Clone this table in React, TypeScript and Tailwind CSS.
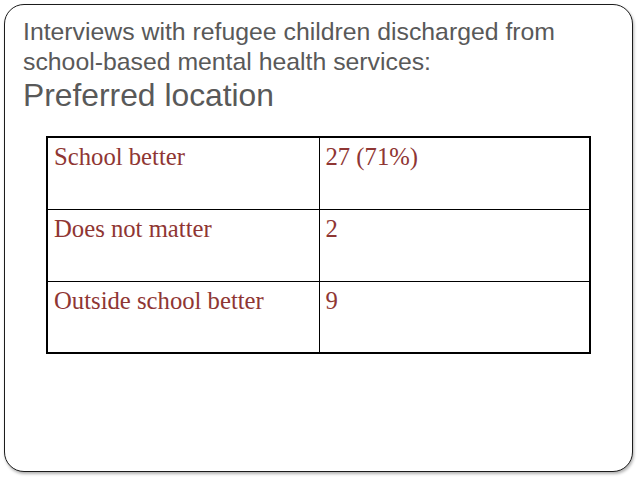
import React from 'react';

const rows: { label: string; value: string }[] = [
  { label: 'School better', value: '27 (71%)' },
  { label: 'Does not matter', value: '2' },
  { label: 'Outside school better', value: '9' },
];

const App: React.FC = () => {
  return (
    <div className="w-[638px] h-[479px] bg-white overflow-hidden">
      <div className="ml-[4px] mt-[4px] w-[629px] h-[468px] rounded-[20px] border-[1.5px] border-[#1c1c1c] bg-white shadow-[1px_2px_3px_rgba(0,0,0,0.3)]">
        <div className="pl-[18px] pt-[12px] text-[#595959] font-['Liberation_Sans',Arial,sans-serif]">
          <p className="text-[24.8px] leading-[30px]">
            Interviews with refugee children discharged from
            <br />
            school-based mental health services:
          </p>
          <h1 className="text-[31.8px] leading-[36px] text-[#595959]">Preferred location</h1>
        </div>

        <table className="ml-[41px] mt-[23px] w-[545px] border-collapse border-2 border-black font-['Liberation_Serif','Times_New_Roman',serif] text-[24.7px] leading-[28px] text-[#8f3633]">
          <tbody>
            {rows.map(({ label, value }) => (
              <tr key={label} className="h-[72px]">
                <td className="w-[272px] border border-black px-[6px] pt-[5px] align-top">{label}</td>
                <td className="border border-black px-[6px] pt-[5px] align-top">{value}</td>
              </tr>
            ))}
          </tbody>
        </table>
      </div>
    </div>
  );
};

export default App;
